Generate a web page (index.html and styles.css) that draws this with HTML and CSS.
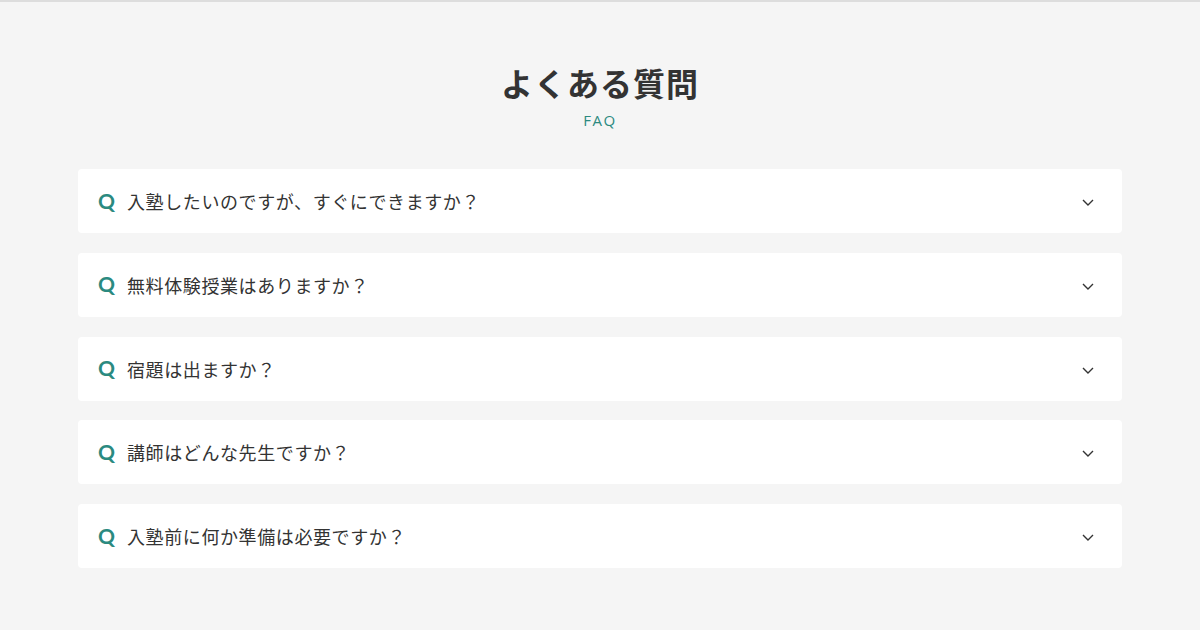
FILE: index.html
```html
<!DOCTYPE html>
<html lang="ja">
<head>
<meta charset="utf-8">
<title>よくある質問</title>
<link rel="stylesheet" href="styles.css">
</head>
<body>
<section class="faq">
  <header class="faq-head">
    <h2 class="faq-title">よくある質問</h2>
    <p class="faq-sub">FAQ</p>
  </header>
  <ul class="faq-list">
    <li class="faq-item"><span class="faq-q">Q</span><span class="faq-text">入塾したいのですが、すぐにできますか？</span><svg class="faq-chev" width="12" height="7" viewBox="0 0 12 7"><path d="M1 1 L6 6 L11 1" fill="none" stroke="#333" stroke-width="1.4"/></svg></li>
    <li class="faq-item"><span class="faq-q">Q</span><span class="faq-text">無料体験授業はありますか？</span><svg class="faq-chev" width="12" height="7" viewBox="0 0 12 7"><path d="M1 1 L6 6 L11 1" fill="none" stroke="#333" stroke-width="1.4"/></svg></li>
    <li class="faq-item"><span class="faq-q">Q</span><span class="faq-text">宿題は出ますか？</span><svg class="faq-chev" width="12" height="7" viewBox="0 0 12 7"><path d="M1 1 L6 6 L11 1" fill="none" stroke="#333" stroke-width="1.4"/></svg></li>
    <li class="faq-item"><span class="faq-q">Q</span><span class="faq-text">講師はどんな先生ですか？</span><svg class="faq-chev" width="12" height="7" viewBox="0 0 12 7"><path d="M1 1 L6 6 L11 1" fill="none" stroke="#333" stroke-width="1.4"/></svg></li>
    <li class="faq-item"><span class="faq-q">Q</span><span class="faq-text">入塾前に何か準備は必要ですか？</span><svg class="faq-chev" width="12" height="7" viewBox="0 0 12 7"><path d="M1 1 L6 6 L11 1" fill="none" stroke="#333" stroke-width="1.4"/></svg></li>
  </ul>
</section>
</body>
</html>
```
FILE: styles.css
```css
html, body {
  margin: 0;
  padding: 0;
}
body {
  background: #f5f5f5;
  border-top: 2px solid #dddddd;
  font-family: "Noto Sans CJK JP", "Noto Sans", sans-serif;
  color: #333333;
  height: 628px;
  box-sizing: border-box;
}
.faq {
  width: 1044px;
  margin: 0 auto;
  padding-top: 58px;
}
.faq-head {
  text-align: center;
}
.faq-title {
  margin: 0;
  font-size: 32px;
  font-weight: 700;
  line-height: 44px;
  letter-spacing: 1px;
  color: #333333;
}
.faq-sub {
  margin: 6px 0 0;
  font-family: "Open Sans", "Noto Sans", sans-serif;
  font-size: 15px;
  font-weight: 500;
  line-height: 20px;
  letter-spacing: 1.5px;
  color: #2b8a80;
}
.faq-list {
  list-style: none;
  margin: 39px 0 0;
  padding: 0;
  display: flex;
  flex-direction: column;
  gap: 19.75px;
}
.faq-item {
  background: #ffffff;
  border-radius: 4px;
  height: 64px;
  display: flex;
  align-items: center;
  padding: 0 28px 0 20px;
}
.faq-q {
  font-family: "Lato", "Open Sans", sans-serif;
  font-weight: 700;
  font-size: 21px;
  color: #2b8a80;
  width: 29px;
  line-height: 1;
  margin-top: -2px;
}
.faq-text {
  flex: 1;
  font-size: 18px;
  letter-spacing: 0.6px;
  line-height: 1;
  color: #333333;
}
.faq-chev {
  display: block;
  margin-top: 3px;
}
```
